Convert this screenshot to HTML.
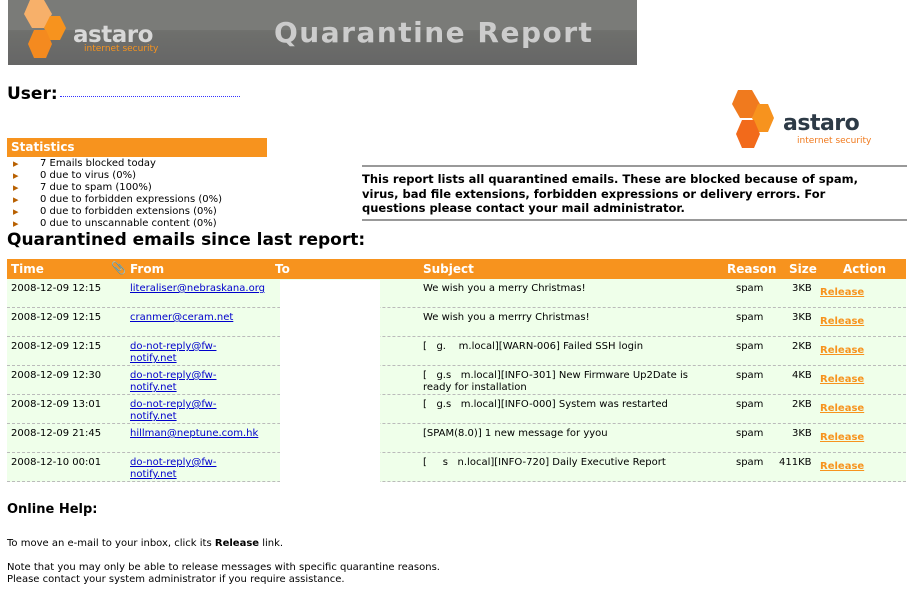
<!DOCTYPE html>
<html><head><meta charset="utf-8"><style>
*{margin:0;padding:0;box-sizing:border-box}
body{width:913px;height:590px;background:#fff;font-family:"DejaVu Sans",Verdana,sans-serif;font-size:10px;color:#000;position:relative;overflow:hidden}
.a{position:absolute;white-space:nowrap}
a{color:#00c;text-decoration:underline}
.rel{color:#f7931e;font-weight:bold;text-decoration:underline}
.hdr{position:absolute;left:7px;top:259px;width:899px;height:20px;background:#f7931e;color:#fff;font-weight:bold;font-size:12px}
.row{position:absolute;left:7px;width:899px;height:29px;background:#efffea;border-bottom:1px dashed #bbb}
.row span{position:absolute;top:4px;line-height:12px;white-space:nowrap}
.st div{height:12px;line-height:12px;position:relative}
.st i{position:absolute;left:0;top:0;color:#b86000;font-style:normal;font-size:11px;line-height:11px}
.st b{font-weight:normal;position:absolute;left:27px;top:0}
</style></head><body>
<div class="a" style="left:8px;top:0;width:629px;height:65px;background:linear-gradient(#8c8c8a,#6e6f6c 50%,#666 100%)"></div>
<div class="a" style="left:8px;top:0;width:629px;height:30px;background:#7a7b78"></div>
<svg class="a" style="left:22px;top:0" width="50" height="62"><polygon points="8,0 22,0 30,14 22,28 10,28 2,14" fill="#f7b06a"/><polygon points="28,16 38,16 44,28 38,40 28,40 22,28" fill="#f7931e"/><polygon points="12,30 24,30 30,44 24,58 12,58 6,44" fill="#f48a1f"/></svg>
<div class="a" style="left:73px;top:22px;font-size:23px;font-weight:bold;color:#d8d8d8;letter-spacing:-0.5px">astaro</div>
<div class="a" style="left:84px;top:44px;font-size:9px;color:#f7931e">internet security</div>
<div class="a" style="left:274px;top:16px;font-size:28px;font-weight:bold;color:#ccc;letter-spacing:1.5px">Quarantine Report</div>

<div class="a" style="left:7px;top:84px;font-size:17px;font-weight:bold">User:</div>
<div class="a" style="left:60px;top:96px;width:180px;border-top:1px dotted #33f"></div>

<svg class="a" style="left:730px;top:88px" width="60" height="64"><polygon points="8,2 22,2 30,16 22,30 10,30 2,16" fill="#f07a1e"/><polygon points="28,16 38,16 44,30 38,44 28,44 22,30" fill="#f7931e"/><polygon points="12,32 24,32 30,46 24,60 12,60 6,46" fill="#f26a1b"/></svg>
<div class="a" style="left:783px;top:111px;font-size:22px;font-weight:bold;color:#2d3a46;letter-spacing:-0.5px">astaro</div>
<div class="a" style="left:797px;top:136px;font-size:9px;color:#f07a1e">internet security</div>

<div class="a" style="left:7px;top:138px;width:260px;height:19px;background:#f7931e;color:#fff;font-weight:bold;font-size:12px;padding:2px 4px">Statistics</div>
<div class="a st" style="left:13px;top:158px;width:250px;font-size:10px">
<div><i>&#9656;</i><b>7 Emails blocked today</b></div>
<div><i>&#9656;</i><b>0 due to virus (0%)</b></div>
<div><i>&#9656;</i><b>7 due to spam (100%)</b></div>
<div><i>&#9656;</i><b>0 due to forbidden expressions (0%)</b></div>
<div><i>&#9656;</i><b>0 due to forbidden extensions (0%)</b></div>
<div><i>&#9656;</i><b>0 due to unscannable content (0%)</b></div>
</div>
<div class="a" style="left:362px;top:165px;width:545px;border-top:2px solid #999"></div>
<div class="a" style="left:362px;top:172px;width:520px;white-space:normal;font-weight:bold;font-size:11.5px;line-height:14.5px">This report lists all quarantined emails. These are blocked because of spam, virus, bad file extensions, forbidden expressions or delivery errors. For questions please contact your mail administrator.</div>
<div class="a" style="left:362px;top:219px;width:545px;border-top:2px solid #999"></div>
<div class="a" style="left:7px;top:230px;font-size:17px;font-weight:bold">Quarantined emails since last report:</div>

<div class="hdr"><span class="a" style="left:4px;top:3px">Time</span><span class="a" style="left:104px;top:2px;color:#ddd">&#128206;</span><span class="a" style="left:123px;top:3px">From</span><span class="a" style="left:268px;top:3px">To</span><span class="a" style="left:416px;top:3px">Subject</span><span class="a" style="left:720px;top:3px">Reason</span><span class="a" style="left:782px;top:3px">Size</span><span class="a" style="left:836px;top:3px">Action</span></div>

<div class="row" style="top:279px"><span style="left:4px">2008-12-09 12:15</span><span style="left:123px"><a>literaliser@nebraskana.org</a></span><span style="left:416px">We wish you a merry Christmas!</span><span style="left:729px">spam</span><span style="left:785px">3KB</span><span style="left:813px;top:8px" class="rel">Release</span></div>
<div class="row" style="top:308px"><span style="left:4px">2008-12-09 12:15</span><span style="left:123px"><a>cranmer@ceram.net</a></span><span style="left:416px">We wish you a merrry Christmas!</span><span style="left:729px">spam</span><span style="left:785px">3KB</span><span style="left:813px;top:8px" class="rel">Release</span></div>
<div class="row" style="top:337px"><span style="left:4px">2008-12-09 12:15</span><span style="left:123px"><a>do-not-reply@fw-<br>notify.net</a></span><span style="left:416px">[&nbsp;&nbsp;&nbsp;g.&nbsp;&nbsp;&nbsp;&nbsp;m.local][WARN-006] Failed SSH login</span><span style="left:729px">spam</span><span style="left:785px">2KB</span><span style="left:813px;top:8px" class="rel">Release</span></div>
<div class="row" style="top:366px"><span style="left:4px">2008-12-09 12:30</span><span style="left:123px"><a>do-not-reply@fw-<br>notify.net</a></span><span style="left:416px">[&nbsp;&nbsp;&nbsp;g.s&nbsp;&nbsp;&nbsp;m.local][INFO-301] New Firmware Up2Date is<br>ready for installation</span><span style="left:729px">spam</span><span style="left:785px">4KB</span><span style="left:813px;top:8px" class="rel">Release</span></div>
<div class="row" style="top:395px"><span style="left:4px">2008-12-09 13:01</span><span style="left:123px"><a>do-not-reply@fw-<br>notify.net</a></span><span style="left:416px">[&nbsp;&nbsp;&nbsp;g.s&nbsp;&nbsp;&nbsp;m.local][INFO-000] System was restarted</span><span style="left:729px">spam</span><span style="left:785px">2KB</span><span style="left:813px;top:8px" class="rel">Release</span></div>
<div class="row" style="top:424px"><span style="left:4px">2008-12-09 21:45</span><span style="left:123px"><a>hillman@neptune.com.hk</a></span><span style="left:416px">[SPAM(8.0)] 1 new message for yyou</span><span style="left:729px">spam</span><span style="left:785px">3KB</span><span style="left:813px;top:8px" class="rel">Release</span></div>
<div class="row" style="top:453px"><span style="left:4px">2008-12-10 00:01</span><span style="left:123px"><a>do-not-reply@fw-<br>notify.net</a></span><span style="left:416px">[&nbsp;&nbsp;&nbsp;&nbsp;&nbsp;s&nbsp;&nbsp;&nbsp;n.local][INFO-720] Daily Executive Report</span><span style="left:729px">spam</span><span style="left:772px">411KB</span><span style="left:813px;top:8px" class="rel">Release</span></div>
<div class="a" style="left:280px;top:280px;width:100px;height:202px;background:#fff"></div>

<div class="a" style="left:7px;top:502px;font-size:13px;font-weight:bold">Online Help:</div>
<div class="a" style="left:7px;top:538px">To move an e-mail to your inbox, click its <b>Release</b> link.</div>
<div class="a" style="left:7px;top:562px;line-height:12px">Note that you may only be able to release messages with specific quarantine reasons.<br>Please contact your system administrator if you require assistance.</div>
</body></html>
